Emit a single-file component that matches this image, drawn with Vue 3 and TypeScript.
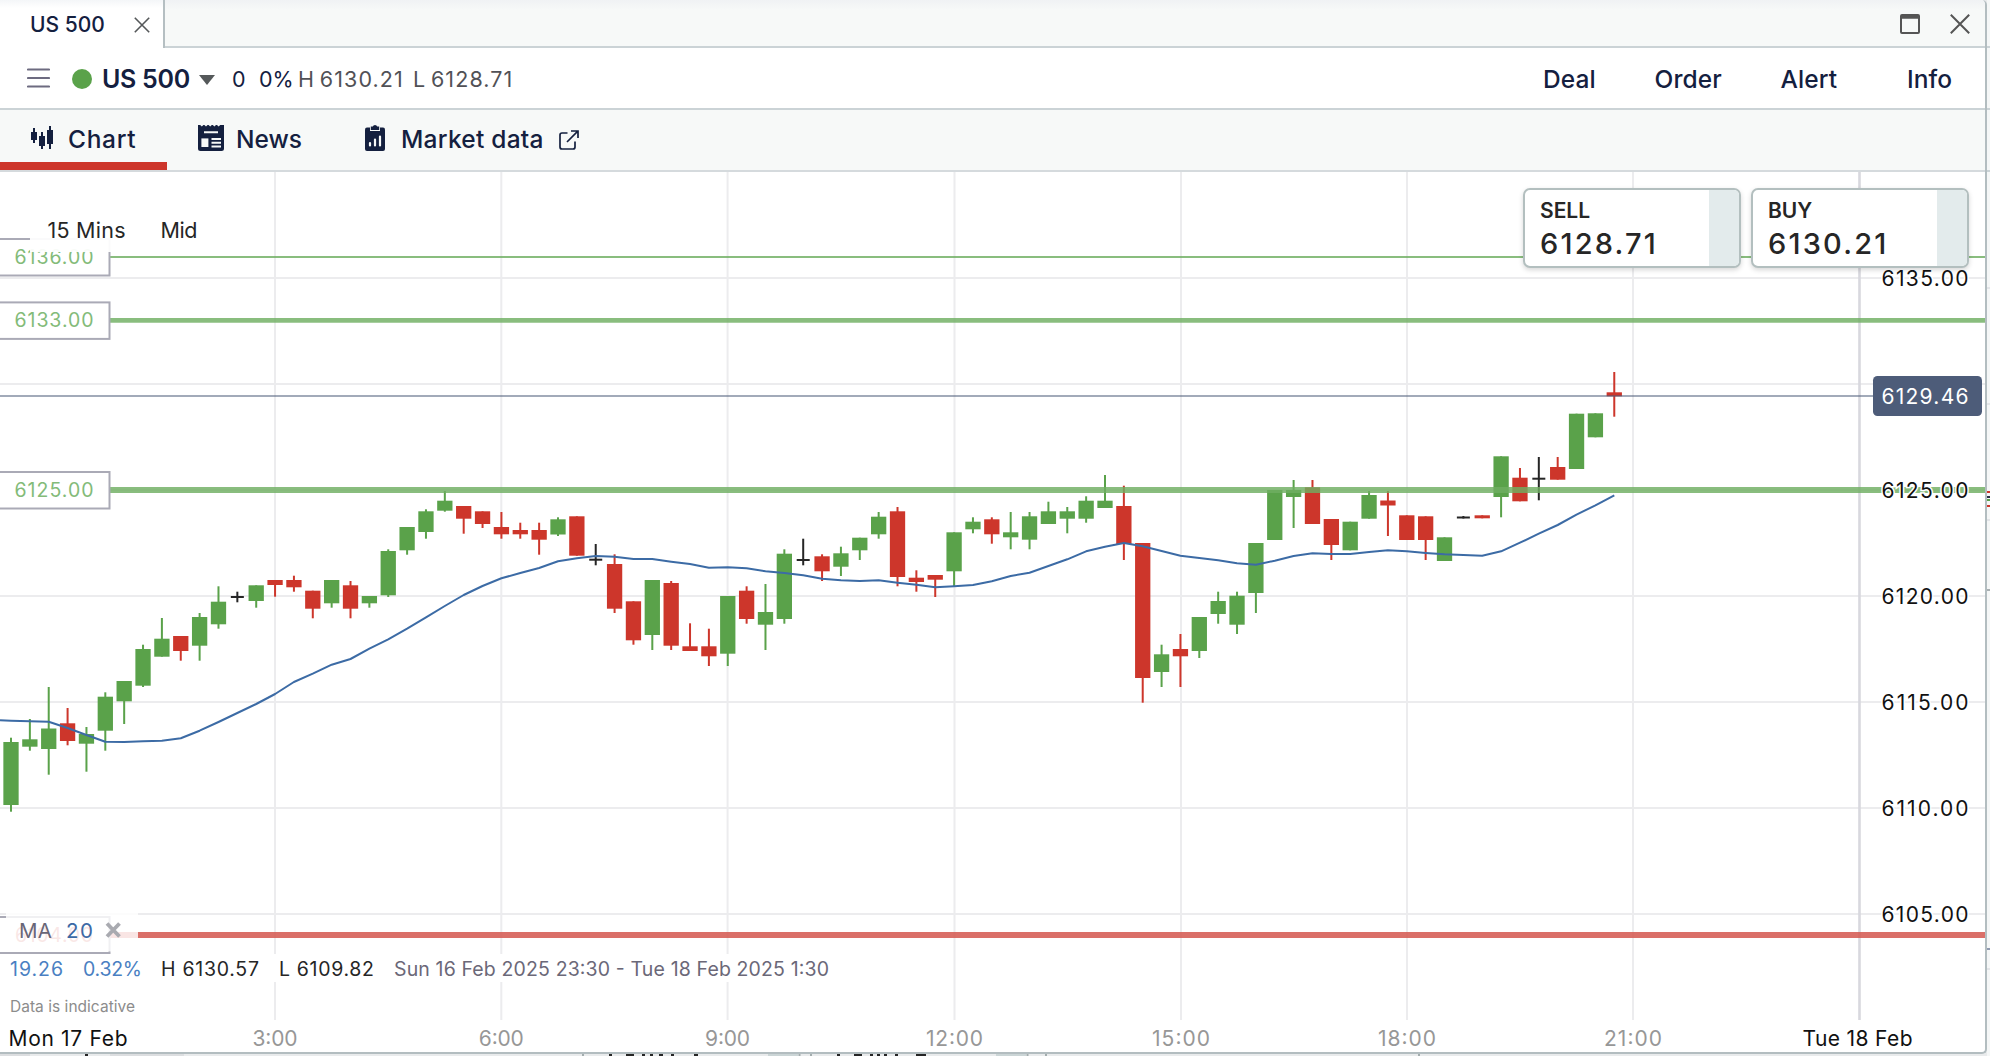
<script setup lang="ts">
type Kind = 'g' | 'r' | 'k'
// kind, body top, body bottom, wick top, wick bottom
type Candle = [Kind, number, number, number, number]

const FIRST_X = 11
const STEP = 18.862
const xAt = (i: number) => FIRST_X + i * STEP

const candles: Candle[] = [
  ['g', 742, 805, 737.7, 811.7], ['g', 739.3, 746.7, 719, 750.7], ['g', 728.5, 749, 687, 774.7],
  ['r', 723.3, 741, 708, 745.3], ['g', 734, 743.7, 727, 771.7], ['g', 696.7, 730.7, 692.3, 750.7],
  ['g', 681, 701.3, 681, 724], ['g', 649, 685.7, 644.7, 687], ['g', 638.7, 656.7, 618, 656.7],
  ['r', 636, 651, 636, 660.7], ['g', 617, 645.7, 613, 660.7], ['g', 601.7, 624.3, 586.3, 628.7],
  ['k', 596, 598, 591.7, 602.3], ['g', 585.3, 601, 585.3, 607.7], ['r', 580, 585, 580, 596.7],
  ['r', 580, 587.3, 575.7, 591.7], ['r', 590.7, 608.7, 590.7, 618.3], ['g', 580, 603.3, 580, 607.7],
  ['r', 585.3, 608.7, 581, 618.3], ['g', 596, 603.3, 596, 607.7], ['g', 551, 595.3, 549.3, 597],
  ['g', 527, 550.3, 527, 554.7], ['g', 511.3, 532, 509.3, 538.7], ['g', 500.7, 510.7, 491, 511.7],
  ['r', 506, 518.7, 506, 533.7], ['r', 511.3, 524, 511.3, 528], ['r', 527, 534.3, 512, 538.7],
  ['r', 530, 534.3, 522.7, 538.7], ['r', 530, 539.7, 522.7, 554.7], ['g', 519.3, 534.5, 517.3, 536],
  ['r', 516.3, 555.7, 516.3, 555.7], ['k', 558.7, 560.7, 544, 565.3], ['r', 564, 608.7, 554.3, 613],
  ['r', 601.3, 640.3, 601.3, 644.7], ['g', 580, 635, 580, 650], ['r', 583, 645.7, 581, 650],
  ['r', 646.3, 651, 623.3, 651], ['r', 646.3, 656.3, 628.7, 666], ['g', 596, 653.7, 596, 666],
  ['r', 590.7, 619, 586.3, 623.7], ['g', 612, 624.7, 584, 650], ['g', 553.7, 619, 549.3, 623.7],
  ['k', 559, 561, 538.7, 565.3], ['r', 556.3, 571.3, 554.3, 581], ['g', 553.3, 566.7, 546.7, 576],
  ['g', 537.7, 550.3, 537.7, 560], ['g', 516.7, 534.3, 512, 538.7], ['r', 511.3, 577, 507, 586.3],
  ['r', 577.7, 582, 570.3, 591.7], ['r', 575, 579.7, 575, 597], ['g', 532.3, 571.3, 532.3, 586.3],
  ['g', 521.7, 529.3, 517.3, 533.3], ['r', 519.3, 534.3, 517.3, 543.7], ['g', 532.3, 537.3, 512, 549.3],
  ['g', 516.3, 539.7, 512, 549.3], ['g', 511.3, 524, 501.7, 524], ['g', 511.3, 518.7, 507, 533.3],
  ['g', 500.7, 518.7, 496.3, 522.7], ['g', 500.7, 508, 475, 508], ['r', 506, 544, 485.7, 560],
  ['r', 543, 678, 543, 702.7], ['g', 654.3, 672, 644.7, 687], ['r', 649, 656.3, 634, 687],
  ['g', 617, 651, 617, 658], ['g', 601, 614, 591.7, 623.7], ['g', 595.7, 624.7, 591.7, 634],
  ['g', 543, 593, 543, 613], ['g', 490, 540, 490, 540], ['g', 490, 497, 480, 528],
  ['r', 487.3, 524, 480, 524], ['r', 519, 545, 519, 560], ['g', 521.7, 550.3, 521.7, 550.3],
  ['g', 495, 518.7, 491, 518.7], ['r', 500.5, 505.5, 491, 536], ['r', 515.3, 540, 515.3, 540],
  ['r', 516.3, 540, 516.3, 560], ['g', 537.3, 561, 537.3, 561], ['k', 516.5, 518.5, 516, 518.5],
  ['r', 515.3, 518.3, 515.3, 518.3], ['g', 456.3, 497, 456.3, 517.3], ['r', 477.7, 501.3, 468, 501.3],
  ['k', 477.7, 479.7, 457, 500.3], ['r', 467, 479.7, 457, 479.7], ['g', 413.7, 469, 413.7, 469],
  ['g', 413.3, 437.3, 413.3, 437.3], ['r', 392.3, 396.3, 372, 416.7],
]

const ma: number[] = [
  720.8, 721.3, 721.7, 728, 735, 741.7, 742, 741.3, 740.7, 738.3, 730.7, 722, 713, 704, 694, 682, 673.7,
  664.7, 659, 648.7, 639.3, 628.7, 617.3, 606, 595, 586, 578.3, 573, 568, 561.3, 558.3, 556, 556.7, 559,
  559, 561.7, 564, 567.7, 567.3, 568.3, 571.3, 573, 575.3, 578.7, 580.3, 581, 580.3, 582.7, 584.7, 587.3,
  586.3, 585, 581.3, 576, 572.7, 566, 559.3, 551.3, 546.7, 543, 546.3, 551, 555.7, 558, 560.3, 563.3,
  564.7, 560.7, 556, 553.3, 554, 554, 552, 550.3, 551.3, 553, 554.3, 555, 555.7, 551.3, 542.7, 533.7, 525,
  514.7, 505.3, 495.3,
]
const maPoints = '0,720.3 ' + ma.map((y, i) => `${xAt(i).toFixed(1)},${y}`).join(' ')

const fills: Record<Kind, string> = { g: '#5aa24a', r: '#cd362b', k: '#262626' }
const bodyWidth = (k: Kind) => (k === 'k' ? 13 : 15.3)

const priceRows = [
  { label: '6135.00', y: 278 }, { label: '', y: 384 }, { label: '6125.00', y: 490 },
  { label: '6120.00', y: 596 }, { label: '6115.00', y: 702 }, { label: '6110.00', y: 808 },
  { label: '6105.00', y: 914 },
]
const times = [
  { label: '3:00', x: 275, w: 45 }, { label: '6:00', x: 501.3, w: 45 }, { label: '9:00', x: 727.6, w: 45 },
  { label: '12:00', x: 954.5, w: 57 }, { label: '15:00', x: 1181, w: 58 }, { label: '18:00', x: 1407, w: 58 },
  { label: '21:00', x: 1633, w: 58 },
]
const levels = [
  { label: '6136.00', y: 257, t: 2.2 }, { label: '6133.00', y: 320.4, t: 4.6 }, { label: '6125.00', y: 490, t: 6 },
]
const actions = [
  { label: 'Deal', w: 52 }, { label: 'Order', w: 70 }, { label: 'Alert', w: 59 }, { label: 'Info', w: 46 },
]
const quotes = [{ side: 'SELL', price: '6128.71' }, { side: 'BUY', price: '6130.21' }]
</script>

<template>
  <div class="desk">
    <main class="window">
      <header class="tabs">
        <div class="tab">
          <span class="tab-name">US 500</span>
          <svg width="16" height="16" viewBox="0 0 16 16"><path d="M.8.8 15.2 15.2M15.2.8.8 15.2" stroke="#55585a" stroke-width="1.6" /></svg>
        </div>
        <div class="tab-rest">
          <svg width="20" height="20" viewBox="0 0 20 20"><rect x="1" y="1" width="18" height="18" rx="1" fill="none" stroke="#555" stroke-width="2" /><path d="M1 3h18" stroke="#555" stroke-width="3.4" /></svg>
          <svg width="20" height="20" viewBox="0 0 20 20"><path d="M.8.8 19.2 19.2M19.2.8.8 19.2" stroke="#555" stroke-width="2" /></svg>
        </div>
      </header>

      <section class="market">
        <svg class="menu" width="23" height="20" viewBox="0 0 23 20"><path d="M1 1.5h21M1 10h21M1 18.5h21" stroke="#6d6b80" stroke-width="2.2" stroke-linecap="round" /></svg>
        <i class="dot"></i>
        <span class="name">US 500</span>
        <svg class="caret" width="16" height="10" viewBox="0 0 16 10"><path d="M0 0h16L8 10z" fill="#55595a" /></svg>
        <span class="chg">0</span>
        <span class="pct">0%</span>
        <span class="hi">H 6130.21</span>
        <span class="lo">L 6128.71</span>
        <nav class="actions">
          <span v-for="a in actions" :key="a.label" :style="{ width: a.w + 'px' }">{{ a.label }}</span>
        </nav>
      </section>

      <nav class="views">
        <div class="view on">
          <svg width="24" height="24" viewBox="0 0 24 24" fill="#14203f">
            <path d="M0 6h2V2h2v4h2v8H4v3H2v-3H0zM8 10h2V6h2v4h2v10h-2v3h-2v-3H8zM16 4h2V0h2v4h2v14h-2v5h-2v-5h-2z" />
          </svg>
          <span class="t1">Chart</span>
        </div>
        <div class="view">
          <svg width="26" height="26" viewBox="0 0 26 26">
            <path d="M0 0h2.2l1.6 1.5L5.4 0h1l1.6 1.5L9.6 0h1l1.6 1.5L13.8 0h1l1.6 1.5L18 0h1l1.6 1.5L22.2 0H26v23.5q0 2.5-2.5 2.5h-21Q0 26 0 23.5z" fill="#14203f" />
            <path d="M6 7.2h14M13.5 14h9.5M13.5 17.8h9.5M13.5 21.6h9.5" stroke="#f7f9f8" stroke-width="2" />
            <rect x="3.4" y="13.4" width="7" height="8.6" fill="#f7f9f8" />
          </svg>
          <span class="t2">News</span>
        </div>
        <div class="view">
          <svg width="20" height="26" viewBox="0 0 20 26">
            <path d="M2 2.5h16q2 0 2 2V24q0 2-2 2H2q-2 0-2-2V4.5q0-2 2-2z" fill="#14203f" />
            <path d="M5 1.5h10V6H5z" fill="#f7f9f8" />
            <path d="M5.8 1.5h2Q8.2 0 10 0t2.2 1.5h2V5H5.8z" fill="#14203f" />
            <path d="M5 20.5v-2.5M10 20.5v-6M15 20.5v-9" stroke="#f7f9f8" stroke-width="2.2" stroke-linecap="round" />
          </svg>
          <span class="t3">Market data</span>
          <svg width="20" height="20" viewBox="0 0 20 20" fill="none" stroke="#14203f" stroke-width="1.7">
            <path d="M8.5 3H3Q1 3 1 5v12q0 2 2 2h11q2 0 2-2v-5.5M12 1h7v7M18.8 1.2 8 12" />
          </svg>
        </div>
      </nav>

      <section class="chart">
        <svg class="plot" width="1985" height="880" viewBox="0 172 1985 880">
          <g stroke="#ececee" stroke-width="2">
            <line v-for="p in priceRows" :key="p.y" x1="0" x2="1985" :y1="p.y" :y2="p.y" />
            <line v-for="t in times" :key="t.x" :x1="t.x" :x2="t.x" y1="172" y2="1020" />
          </g>
          <line x1="1859.5" x2="1859.5" y1="172" y2="1020" stroke="#d8d8de" stroke-width="2.6" />

          <g v-for="(c, i) in candles" :key="i" :fill="fills[c[0]]">
            <rect :x="xAt(i) - 1" :y="c[3]" width="2" :height="c[4] - c[3]" />
            <rect :x="xAt(i) - bodyWidth(c[0]) / 2" :y="c[1]" :width="bodyWidth(c[0])" :height="c[2] - c[1]" />
          </g>
          <polyline :points="maPoints" fill="none" stroke="#3c6ba5" stroke-width="2" stroke-linejoin="round" />
          <line x1="0" x2="1873" y1="396" y2="396" stroke="#4d5c79" stroke-opacity=".52" stroke-width="2" />

          <g v-for="l in levels" :key="l.label">
            <line x1="110" x2="1985" :y1="l.y" :y2="l.y" stroke="#6fae62" stroke-opacity=".82" :stroke-width="l.t" />
            <rect x="-4" :y="l.y - 18" width="113.5" height="36.5" fill="#fff" stroke="#aaaab6" stroke-width="2" />
            <text x="14.5" :y="l.y + 6.6" class="level" textLength="79">{{ l.label }}</text>
          </g>
          <rect x="30" y="236" width="85" height="16" fill="#fff" fill-opacity=".94" />

          <line x1="110" x2="1985" y1="935" y2="935" stroke="#d4574f" stroke-opacity=".86" stroke-width="6.2" />
          <rect x="-4" y="917" width="113.5" height="36" fill="#fff" stroke="#aaaab6" stroke-width="2" />
          <text x="15" y="941.5" class="level red" textLength="78">6104.00</text>
          <rect x="6" y="910" width="132" height="41.5" fill="#fff" fill-opacity=".82" />
          <rect x="0" y="954" width="836" height="28" fill="#fff" />

          <text x="47.5" y="238" class="tool" textLength="78">15 Mins</text>
          <text x="160.5" y="238" class="tool" textLength="37">Mid</text>

          <text x="19" y="937.5" class="study" textLength="33">MA</text>
          <text x="66" y="937.5" class="study blue" textLength="27">20</text>
          <path d="M107 923.5 119.5 936.5M119.5 923.5 107 936.5" stroke="#a9aab0" stroke-width="3.8" />

          <g class="stats">
            <text x="10" y="976" class="lblue" textLength="53">19.26</text>
            <text x="83" y="976" class="lblue" textLength="59">0.32%</text>
            <text x="161" y="976" textLength="98">H 6130.57</text>
            <text x="279" y="976" textLength="95">L 6109.82</text>
            <text x="394" y="976" class="range" textLength="435">Sun 16 Feb 2025 23:30 - Tue 18 Feb 2025 1:30</text>
          </g>
          <text x="10" y="1012" class="note" textLength="125">Data is indicative</text>

          <g class="axis">
            <template v-for="p in priceRows" :key="p.y">
              <text v-if="p.label" x="1881.5" :y="p.y + 8" textLength="87">{{ p.label }}</text>
            </template>
            <text v-for="t in times" :key="t.x" :x="t.x - t.w / 2" y="1046" class="hour" :textLength="t.w">{{ t.label }}</text>
            <text x="8.5" y="1046" textLength="119">Mon 17 Feb</text>
            <text x="1802.5" y="1046" textLength="110">Tue 18 Feb</text>
          </g>
          <rect x="1873" y="376" width="109" height="40" rx="4.5" fill="#4d5c79" />
          <text x="1881.5" y="404" class="last" textLength="87">6129.46</text>
        </svg>

        <div class="quotes">
          <div v-for="q in quotes" :key="q.side" class="quote">
            <div class="quote-main">
              <b>{{ q.side }}</b>
              <strong>{{ q.price }}</strong>
            </div>
            <i></i>
          </div>
        </div>
      </section>
    </main>
    <svg class="behind" width="3" height="1056" viewBox="0 0 3 1056">
      <rect width="3" height="1056" fill="#f5f7f7" />
      <path d="M0 47h3M0 109h3M0 171h3" stroke="#cbd3d6" stroke-width="2" />
      <path d="M0 288h3M0 404h3M0 520h3M0 969h3" stroke="#e3e5e8" stroke-width="2" />
      <path d="M0 492h3M0 506h3" stroke="#cd362b" stroke-width="2" />
      <path d="M0 497h3" stroke="#2b2f45" stroke-width="2" />
      <path d="M0 500h3" stroke="#5aa24a" stroke-width="2" />
      <path d="M0 590h3" stroke="#a9b0b2" stroke-width="2" />
      <path d="M0 949h3" stroke="#8f9ab0" stroke-width="2" />
    </svg>
    <!-- top edges of the windows stacked underneath -->
    <svg class="below" width="1990" height="2" viewBox="0 0 1990 2">
      <path d="M0 1h30M110 1h74" stroke="#dcdee0" stroke-width="2" />
      <path d="M768 1h30M996 1h30" stroke="#cbd5d6" stroke-width="2" />
      <path d="M583 0v2M799.5 0v2M811 0v2M1027.500 0v2M1046 0v2M1419 0v2" stroke="#a3adae" stroke-width="2" />
      <path d="M85 1h3M609 1h3M626 1h8M642 1h3M650 1h3M659 1h4M671 1h3M694 1h4M837 1h3M854 1h8M870 1h3M877 1h3M884 1h3M895 1h3M916 1h10" stroke="#262626" stroke-width="2" />
    </svg>
  </div>
</template>

<style>
html,
body {
  margin: 0;
  background: #e9ebec;
  overflow: hidden;
}
</style>

<style scoped>
.desk {
  position: relative;
  display: flex;
  width: 1990px;
  height: 1056px;
  overflow: hidden;
  background: #e9ebec;
  font-family: Inter, 'Liberation Sans', sans-serif;
  color: #14203f;
}
.window {
  box-sizing: border-box;
  width: 1987px;
  height: 1054px;
  background: #fff;
  border-right: 2px solid #b3bdc0;
  border-bottom: 2px solid #b3bdc0;
  border-radius: 0 5px 5px 0;
  display: flex;
  flex-direction: column;
  overflow: hidden;
  flex: none;
}
.behind {
  flex: none;
}
.below {
  position: absolute;
  left: 0;
  bottom: 0;
}
.tabs {
  display: flex;
  height: 48px;
  flex: none;
}
.tab {
  box-sizing: border-box;
  width: 165px;
  border-right: 2px solid #b5bfc2;
  display: flex;
  align-items: center;
  padding-left: 30px;
  padding-top: 1px;
  background: linear-gradient(#f4f6f8, #fff 8px);
}
.tab-name {
  width: 104px;
  font-size: 21px;
  font-weight: 500;
}
.tab-rest {
  box-sizing: border-box;
  flex: 1;
  display: flex;
  align-items: center;
  justify-content: flex-end;
  gap: 30px;
  padding: 2px 15px 0 0;
  background: linear-gradient(#f0f2f4, #f7f9f8 10px);
  border-bottom: 2px solid #cbd3d6;
}
.market {
  box-sizing: border-box;
  height: 62px;
  flex: none;
  display: flex;
  align-items: center;
  border-bottom: 2px solid #cbd3d6;
  padding: 0 32px 0 27px;
  font-size: 21.5px;
  white-space: nowrap;
}
.market span {
  padding-top: 2px;
}
.menu {
  margin-right: 22px;
}
.dot {
  width: 20px;
  height: 20px;
  border-radius: 50%;
  background: #5aa24a;
  margin: 2px 10px 0 0;
}
.name {
  width: 97px;
  font-size: 25px;
  font-weight: 600;
  letter-spacing: -0.3px;
}
.caret {
  margin: 3px 17px 0 0;
}
.chg {
  width: 27px;
}
.pct {
  width: 39px;
}
.hi,
.lo {
  color: #515156;
  letter-spacing: 1.1px;
  word-spacing: -2.5px;
}
.hi {
  width: 115px;
}
.actions {
  flex: 1;
  display: flex;
  justify-content: flex-end;
  font-size: 24.5px;
  font-weight: 500;
}
.actions span {
  letter-spacing: 0.1px;
}
.actions span + span {
  margin-left: 59.5px;
}
.actions span:nth-child(3) {
  margin-left: 56px;
}
.actions span:nth-child(4) {
  margin-left: 67.5px;
}
.views {
  box-sizing: border-box;
  height: 62px;
  flex: none;
  display: flex;
  background: #f7f9f8;
  border-bottom: 2px solid #d5dadd;
  font-size: 24.5px;
  font-weight: 500;
}
.view {
  box-sizing: border-box;
  display: flex;
  align-items: center;
  padding-left: 31px;
  white-space: nowrap;
}
.view span {
  margin-top: -2px;
}
.on {
  width: 167px;
  border-bottom: 8px solid #cd362b;
  padding-top: 8px;
}
.view > svg:first-child {
  margin-top: -5px;
}
.t1 {
  margin-left: 13px;
  letter-spacing: 0.7px;
}
.t2 {
  margin-left: 12px;
  width: 98px;
}
.t3 {
  margin-left: 16px;
  width: 158px;
  letter-spacing: 0.25px;
}
.chart {
  position: relative;
  height: 880px;
}
.plot {
  display: block;
}
.quotes {
  position: absolute;
  top: 16px;
  right: 16px;
  display: flex;
  gap: 10px;
}
.quote {
  box-sizing: border-box;
  width: 218px;
  height: 80px;
  display: flex;
  background: #fff;
  border: 2px solid #b3bfbf;
  border-radius: 7px;
  overflow: hidden;
  color: #262626;
  box-shadow: 0 2px 5px rgba(0, 0, 0, 0.16);
}
.quote-main {
  flex: 1;
  padding: 8px 0 0 15px;
  display: flex;
  flex-direction: column;
}
.quote b {
  font-size: 21px;
  line-height: 26px;
  font-weight: 600;
}
.quote strong {
  font-size: 29px;
  line-height: 40px;
  font-weight: 500;
  letter-spacing: 2.2px;
}
.quote i {
  width: 30px;
  background: #e3ebec;
}
.level {
  font-size: 19.5px;
  fill: #83bb79;
}
.red {
  fill: #dc7a73;
}
.tool {
  font-size: 21.5px;
  fill: #262626;
}
.study {
  font-size: 20.5px;
  fill: #686677;
}
.blue {
  fill: #3c69a5;
}
.stats {
  font-size: 19.5px;
  fill: #262626;
}
.lblue {
  fill: #4a7fc2;
}
.range {
  fill: #6b6878;
}
.note {
  font-size: 15.5px;
  fill: #8c8c8c;
}
.axis {
  font-size: 21px;
  fill: #111;
  stroke: #fff;
  stroke-width: 3px;
  paint-order: stroke;
}
.hour {
  fill: #979797;
}
.last {
  font-size: 21px;
  fill: #fff;
}
</style>
